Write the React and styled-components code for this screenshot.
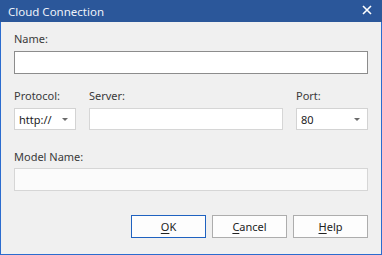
import React from "react";
import styled, {createGlobalStyle} from "styled-components";

const Global = createGlobalStyle`
  html, body {
    margin: 0;
    padding: 0;
    background: #f0f0f0;
  }
  * {
    box-sizing: border-box;
  }
`

const Window = styled.div`
  width: 382px;
  height: 255px;
  display: flex;
  flex-direction: column;
  background: #f0f0f0;
  border: 1px solid #2b6ccf;
  border-top: none;
  font-family: "Noto Sans", "Liberation Sans", sans-serif;
  font-size: 11px;
  color: #3a3a3a;
`

const TitleBar = styled.div`
  height: 22px;
  margin: 0 -1px;
  padding: 0 9px 0 8px;
  display: flex;
  align-items: center;
  justify-content: space-between;
  background: #2b579a;
  color: #eef2f9;
  font-size: 11.5px;
`

const Close = styled.div`
  width: 12px;
  height: 12px;
  display: flex;
  align-items: center;
  justify-content: center;
  margin-top: -3px;
`

const Body = styled.div`
  flex: 1;
  display: flex;
  flex-direction: column;
  padding: 9px 13px 0 13px;
`

const Field = styled.div`
  display: flex;
  flex-direction: column;
  gap: ${props => props.gap || 4}px;
  margin-top: ${props => props.top || 0}px;
`

const Label = styled.div`
  line-height: 16px;
  height: 16px;
`

const Input = styled.div`
  height: ${props => props.h || 23}px;
  background: ${props => props.disabled ? "#fbfbfb" : "#ffffff"};
  border: 1px solid ${props => props.light ? "#d6d6d6" : "#8c8c8c"};
`

const Row = styled.div`
  display: grid;
  grid-template-columns: 62px 1fr 72px;
  column-gap: 13px;
  margin-top: 14px;
`

const Combo = styled.div`
  height: 22px;
  background: #ffffff;
  border: 1px solid #d3d3d3;
  display: flex;
  align-items: center;
  justify-content: space-between;
  padding: 0 7px 0 4px;
  color: #222;
`

const Arrow = styled.span`
  width: 0;
  height: 0;
  border-left: 3.5px solid transparent;
  border-right: 3.5px solid transparent;
  border-top: 3.5px solid #6a6a6a;
  margin-top: 1px;
`

const Buttons = styled.div`
  display: flex;
  justify-content: flex-end;
  gap: 6px;
  margin-top: 24px;
`

const Button = styled.div`
  width: 75px;
  height: 23px;
  display: flex;
  align-items: center;
  justify-content: center;
  background: #fdfdfd;
  border: 1px solid ${props => props.primary ? "#1f62c0" : "#adadad"};
  color: #222;
  u {
    text-decoration-thickness: 1px;
    text-underline-offset: 2px;
  }
`

const App = () => {
    return (
        <>
            <Global/>
            <Window>
                <TitleBar>
                    <span>Cloud Connection</span>
                    <Close>
                        <svg width="10" height="10" viewBox="0 0 10 10">
                            <path d="M1 1 L9 9 M9 1 L1 9" stroke="#ffffff" strokeWidth="1.6"/>
                        </svg>
                    </Close>
                </TitleBar>
                <Body>
                    <Field>
                        <Label>Name:</Label>
                        <Input/>
                    </Field>
                    <Row>
                        <Field>
                            <Label>Protocol:</Label>
                            <Combo>http:// <Arrow/></Combo>
                        </Field>
                        <Field>
                            <Label>Server:</Label>
                            <Input h={22} light/>
                        </Field>
                        <Field>
                            <Label>Port:</Label>
                            <Combo>80 <Arrow/></Combo>
                        </Field>
                    </Row>
                    <Field top={19} gap={3}>
                        <Label>Model Name:</Label>
                        <Input light disabled/>
                    </Field>
                    <Buttons>
                        <Button primary><span><u>O</u>K</span></Button>
                        <Button><span><u>C</u>ancel</span></Button>
                        <Button><span><u>H</u>elp</span></Button>
                    </Buttons>
                </Body>
            </Window>
        </>
    )
}

export default App
